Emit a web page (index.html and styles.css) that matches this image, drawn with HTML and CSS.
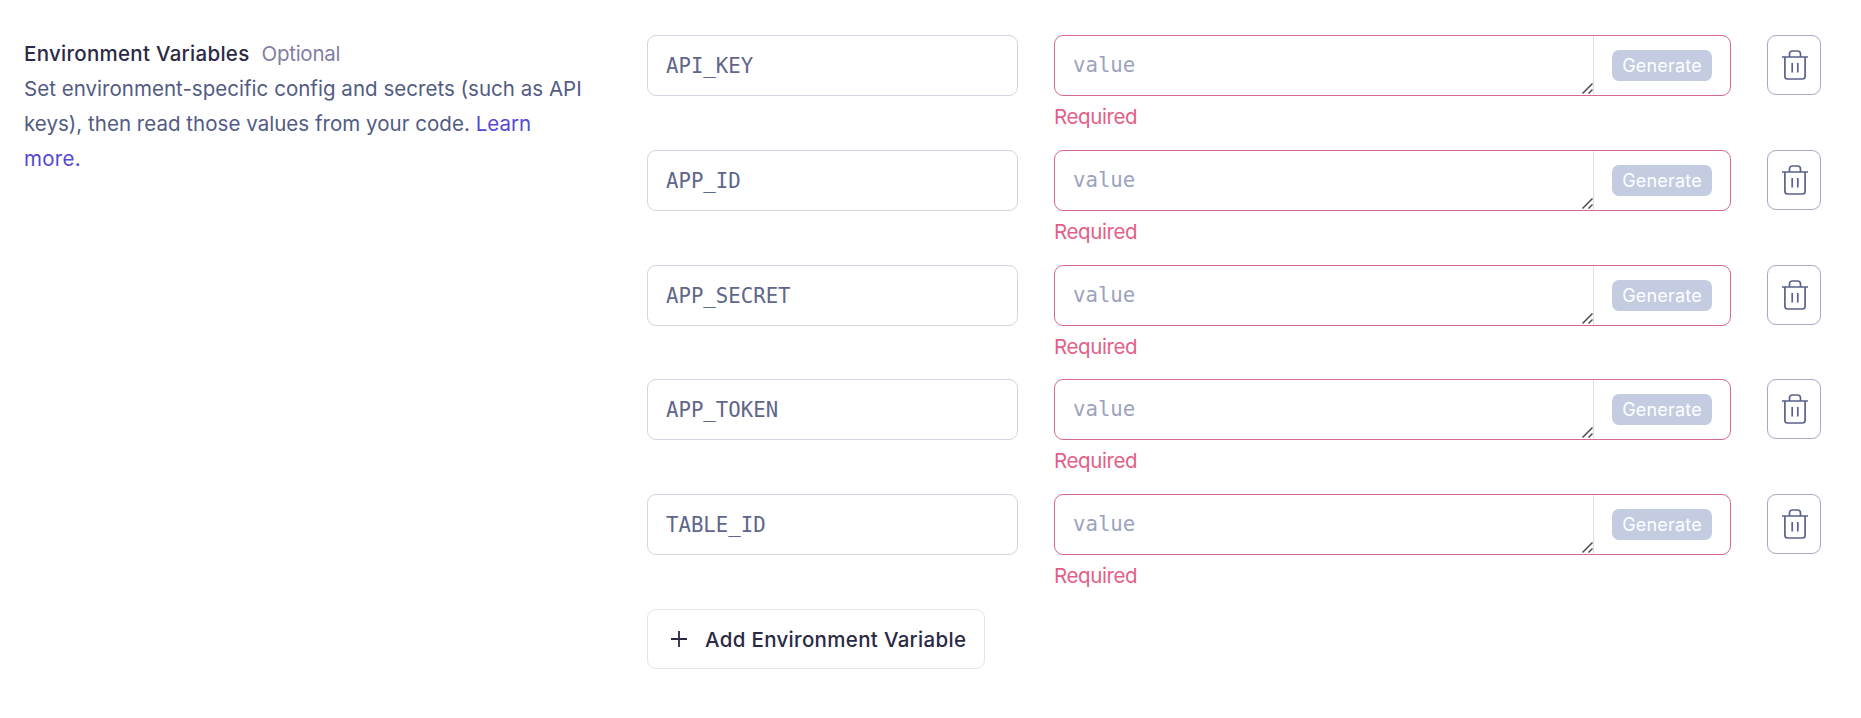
FILE: index.html
```html
<!DOCTYPE html>
<html lang="en">
<head>
<meta charset="utf-8">
<title>Environment Variables</title>
<link rel="stylesheet" href="styles.css">
</head>
<body>
<svg width="0" height="0" class="defs" aria-hidden="true">
  <symbol id="trash" viewBox="0 0 26 30"><path d="M0 7H26M2.9 7V26.3Q2.9 29 5.6 29H20.4Q23.1 29 23.1 26.3V7M7.5 7V4Q7.5 1 10.5 1H15.5Q18.5 1 18.5 4V7M10.2 13V22.5M15.8 13V22.5"/></symbol>
  <symbol id="grip" viewBox="0 0 11 11"><path d="M.5 10.5L10.5 .5M6.5 10.5L10.5 6.5"/></symbol>
</svg>
<main class="section">
  <div class="info">
    <h2 class="heading"><span class="title">Environment Variables</span><span class="optional">Optional</span></h2>
    <p class="description"><span class="line-one">Set environment-specific config and secrets (such as API</span><br><span class="line-two">keys), then read those values from your code. <a class="link">Learn</a></span><br><a class="link line-three">more.</a></p>
  </div>
  <div class="variables">
    <div class="row">
      <div class="name">API_KEY</div>
      <div class="field"><div class="value-box"><div class="value">value<svg class="grip"><use href="#grip"/></svg></div><div class="action"><button class="generate"><span>Generate</span></button></div></div><div class="error">Required</div></div>
      <button class="delete" aria-label="Delete"><svg class="trash"><use href="#trash"/></svg></button>
    </div>
    <div class="row">
      <div class="name">APP_ID</div>
      <div class="field"><div class="value-box"><div class="value">value<svg class="grip"><use href="#grip"/></svg></div><div class="action"><button class="generate"><span>Generate</span></button></div></div><div class="error">Required</div></div>
      <button class="delete" aria-label="Delete"><svg class="trash"><use href="#trash"/></svg></button>
    </div>
    <div class="row">
      <div class="name">APP_SECRET</div>
      <div class="field"><div class="value-box"><div class="value">value<svg class="grip"><use href="#grip"/></svg></div><div class="action"><button class="generate"><span>Generate</span></button></div></div><div class="error">Required</div></div>
      <button class="delete" aria-label="Delete"><svg class="trash"><use href="#trash"/></svg></button>
    </div>
    <div class="row">
      <div class="name">APP_TOKEN</div>
      <div class="field"><div class="value-box"><div class="value">value<svg class="grip"><use href="#grip"/></svg></div><div class="action"><button class="generate"><span>Generate</span></button></div></div><div class="error">Required</div></div>
      <button class="delete" aria-label="Delete"><svg class="trash"><use href="#trash"/></svg></button>
    </div>
    <div class="row">
      <div class="name">TABLE_ID</div>
      <div class="field"><div class="value-box"><div class="value">value<svg class="grip"><use href="#grip"/></svg></div><div class="action"><button class="generate"><span>Generate</span></button></div></div><div class="error">Required</div></div>
      <button class="delete" aria-label="Delete"><svg class="trash"><use href="#trash"/></svg></button>
    </div>
    <button class="add"><svg class="plus" viewBox="0 0 16 16"><path d="M8 0V16M0 8H16"/></svg><span>Add Environment Variable</span></button>
  </div>
</main>
</body>
</html>
```
FILE: styles.css
```css
* { box-sizing: border-box; }
body {
  margin: 0;
  background: #fff;
  font-family: Inter, "Liberation Sans", sans-serif;
  font-size: 20.5px;
  letter-spacing: -.4px;
}
button { background: #fff; font: inherit; letter-spacing: inherit; padding: 0; }
.defs { position: absolute; }
.section {
  display: grid;
  grid-template-columns: 623px 1174px;
  padding: 35px 0 0 24px;
  height: 718px;
}
.info { white-space: nowrap; }
.heading {
  display: flex;
  gap: 12px;
  margin: 0;
  font-size: 20.5px;
  line-height: 35px;
  height: 35px;
  padding-top: 1px;
}
.title { color: #2b2a45; font-weight: 500; letter-spacing: .28px; }
.optional { color: #827fa2; font-weight: 400; letter-spacing: -.25px; }
.description {
  margin: 0;
  padding-top: 1px;
  color: #525b83;
  line-height: 35px;
  letter-spacing: .03px;
}
.line-three { letter-spacing: .3px; }
.link { color: #5448d3; text-decoration: none; }
.row {
  display: grid;
  grid-template-columns: 371px 677px 54px;
  column-gap: 36px;
  height: 114.8px;
  align-items: start;
}
.name, .value {
  font-family: "DejaVu Sans Mono", monospace;
  font-size: 20.7px;
  letter-spacing: 0;
  line-height: 59px;
}
.name {
  height: 61px;
  padding: 1px 0 0 18px;
  border: 1px solid #d4d4e3;
  border-radius: 9px;
  color: #606789;
}
.value-box {
  display: flex;
  height: 61px;
  border: 1px solid #d96a8b;
  border-radius: 9px;
}
.value {
  position: relative;
  width: 539px;
  padding-left: 18px;
  border-right: 1px solid #dddfe9;
  color: #9ba2bf;
}
.grip {
  position: absolute;
  right: 0;
  bottom: 1px;
  width: 11px;
  height: 11px;
  fill: none;
  stroke: #4b4b4b;
  stroke-width: 1.5;
}
.action { flex: 1; padding: 14px 0 0 18px; }
.generate {
  display: block;
  width: 100px;
  height: 31px;
  border: 0;
  border-radius: 7px;
  background: #c3cce1;
  color: #fff;
  font-size: 18px;
  letter-spacing: .2px;
  line-height: 31px;
}
.error {
  line-height: 42px;
  color: #e45f86;
}
.delete {
  display: flex;
  align-items: center;
  justify-content: center;
  height: 60px;
  padding-left: 1px;
  border: 1px solid #a7a8c4;
  border-radius: 9px;
}
.trash {
  width: 26px;
  height: 30px;
  fill: none;
  stroke: #5b628b;
  stroke-width: 1.7;
}
.add {
  display: flex;
  align-items: center;
  width: 338px;
  height: 60px;
  padding: 1px 0 0 23px;
  gap: 18px;
  border: 1px solid #e4e4ee;
  border-radius: 9px;
  color: #2b2a45;
  font-weight: 500;
  letter-spacing: .32px;
  white-space: nowrap;
}
.plus { width: 16px; height: 16px; stroke: currentColor; stroke-width: 1.8; }
```
